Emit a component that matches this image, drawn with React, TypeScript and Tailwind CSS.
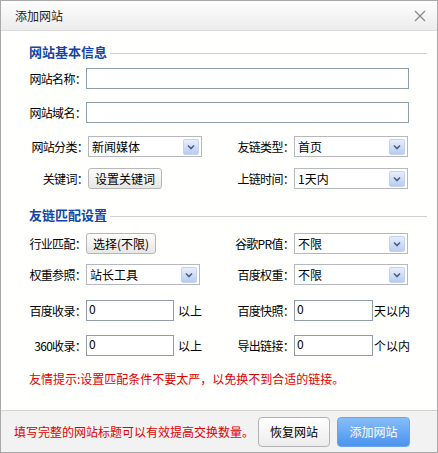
import React from "react";

const font = {
  fontFamily: '"Noto Sans CJK SC", "Liberation Sans", sans-serif',
};

function Label({ text, w = "w-[57px]" }: { text: string; w?: string }) {
  return (
    <span
      className={`${w} shrink-0 flex justify-end whitespace-nowrap tracking-[-0.7px] text-[12px] leading-[16px] text-black`}
    >
      {text}
    </span>
  );
}

function SelectBox({ value, w = "w-[114px]" }: { value: string; w?: string }) {
  return (
    <div
      className={`${w} h-[21px] shrink-0 flex items-center justify-between border border-[#b5b9bf] bg-white pl-[3px] pr-[2px]`}
    >
      <span className="whitespace-nowrap text-[12px] leading-[16px] text-black">{value}</span>
      <span className="w-[16px] h-[16px] flex items-center justify-center rounded-[2px] border border-[#c3d3ee] bg-gradient-to-b from-[#e8eefa] to-[#b9cdf1]">
        <svg width="8" height="6" viewBox="0 0 8 6">
          <path d="M1 1.5 L4 4.5 L7 1.5" fill="none" stroke="#4a5f86" strokeWidth="1.6" />
        </svg>
      </span>
    </div>
  );
}

function TextInput({ value = "", w }: { value?: string; w: string }) {
  return (
    <div
      className={`${w} h-[21px] shrink-0 border border-[#8f9daa] bg-white px-[2px] text-[12px] leading-[16px] text-black`}
    >
      {value}
    </div>
  );
}

function SmallButton({ text }: { text: string }) {
  return (
    <div className="h-[21px] px-[6px] flex items-center whitespace-nowrap rounded-[3px] border border-[#b7b7b7] bg-gradient-to-b from-[#fdfdfd] to-[#e6e6e6] text-[12px] leading-[16px] text-black">
      {text}
    </div>
  );
}

function Heading({ text }: { text: string }) {
  return (
    <div className="flex items-center h-[16px]">
      <span className="whitespace-nowrap text-[13px] font-bold leading-[16px] text-[#1446a8]">
        {text}
      </span>
      <div className="flex-1 ml-[3px] mt-[3px] border-t border-[#cfcfcf]" />
    </div>
  );
}

export default function App() {
  return (
    <div
      style={font}
      className="w-[438px] h-[453px] flex flex-col overflow-hidden border border-[#a9a9a9] bg-white"
    >
      {/* Header */}
      <div className="h-[30px] shrink-0 flex items-center justify-between pl-[14px] pr-[11px] border-b border-[#dcdcdc] bg-gradient-to-b from-[#fefefe] to-[#ececec]">
        <span className="text-[12px] leading-[16px] text-[#222]">添加网站</span>
        <svg width="12" height="12" viewBox="0 0 12 12">
          <path d="M1 1 L11 11 M11 1 L1 11" stroke="#8a8a8a" strokeWidth="1.3" />
        </svg>
      </div>

      {/* Body */}
      <div className="flex-1 pl-[28px] pr-[10px] pt-[13px] bg-[#fffffd]">
        <Heading text="网站基本信息" />

        <div className="mt-[8px] flex items-center">
          <Label text="网站名称：" />
          <TextInput w="w-[323px]" />
        </div>
        <div className="mt-[13px] flex items-center">
          <Label text="网站域名：" />
          <TextInput w="w-[323px]" />
        </div>

        <div className="mt-[13px] flex items-center">
          <div className="w-[206px] shrink-0 flex items-center">
            <Label text="网站分类：" w="w-[59px]" />
            <SelectBox value="新闻媒体" />
          </div>
          <Label text="友链类型：" w="w-[59px]" />
          <SelectBox value="首页" />
        </div>

        <div className="mt-[11px] flex items-center">
          <div className="w-[206px] shrink-0 flex items-center">
            <Label text="关键词：" w="w-[59px]" />
            <SmallButton text="设置关键词" />
          </div>
          <Label text="上链时间：" w="w-[59px]" />
          <SelectBox value="1天内" />
        </div>

        <div className="mt-[18px]">
          <Heading text="友链匹配设置" />
        </div>

        <div className="mt-[10px] flex items-center">
          <div className="w-[206px] shrink-0 flex items-center">
            <Label text="行业匹配：" />
            <SmallButton text="选择(不限)" />
          </div>
          <Label text="谷歌PR值：" w="w-[59px]" />
          <SelectBox value="不限" />
        </div>

        <div className="mt-[10px] flex items-center">
          <div className="w-[206px] shrink-0 flex items-center">
            <Label text="权重参照：" />
            <SelectBox value="站长工具" />
          </div>
          <Label text="百度权重：" w="w-[59px]" />
          <SelectBox value="不限" />
        </div>

        <div className="mt-[15px] flex items-center">
          <div className="w-[206px] shrink-0 flex items-center">
            <Label text="百度收录：" w="w-[57px]" />
            <TextInput value="0" w="w-[88px]" />
            <span className="ml-[4px] whitespace-nowrap text-[12px] leading-[16px]">以上</span>
          </div>
          <Label text="百度快照：" w="w-[59px]" />
          <TextInput value="0" w="w-[79px]" />
          <span className="ml-[1px] whitespace-nowrap text-[12px] leading-[16px]">天以内</span>
        </div>

        <div className="mt-[14px] flex items-center">
          <div className="w-[206px] shrink-0 flex items-center">
            <Label text="360收录：" w="w-[57px]" />
            <TextInput value="0" w="w-[88px]" />
            <span className="ml-[4px] whitespace-nowrap text-[12px] leading-[16px]">以上</span>
          </div>
          <Label text="导出链接：" w="w-[59px]" />
          <TextInput value="0" w="w-[79px]" />
          <span className="ml-[1px] whitespace-nowrap text-[12px] leading-[16px]">个以内</span>
        </div>

        <p className="mt-[15px] whitespace-nowrap text-[12px] leading-[16px] text-[#e00000]">
          友情提示:设置匹配条件不要太严，以免换不到合适的链接。
        </p>
      </div>

      {/* Footer */}
      <div className="h-[42px] shrink-0 flex items-center pl-[13px] pr-[27px] border-t border-[#d4d4d4] bg-[#f2f2f2]">
        <span className="flex-1 whitespace-nowrap text-[12px] leading-[16px] text-[#e00000]">
          填写完整的网站标题可以有效提高交换数量。
        </span>
        <div className="w-[72px] h-[30px] shrink-0 flex items-center justify-center rounded-[4px] border border-[#b3b3b3] bg-gradient-to-b from-[#ffffff] to-[#ececec] text-[12px] text-black">
          恢复网站
        </div>
        <div className="ml-[7px] w-[73px] h-[30px] shrink-0 flex items-center justify-center rounded-[4px] border border-[#6aa5ec] bg-gradient-to-b from-[#86bdf8] to-[#4b93ee] text-[12px] text-white">
          添加网站
        </div>
      </div>
    </div>
  );
}
